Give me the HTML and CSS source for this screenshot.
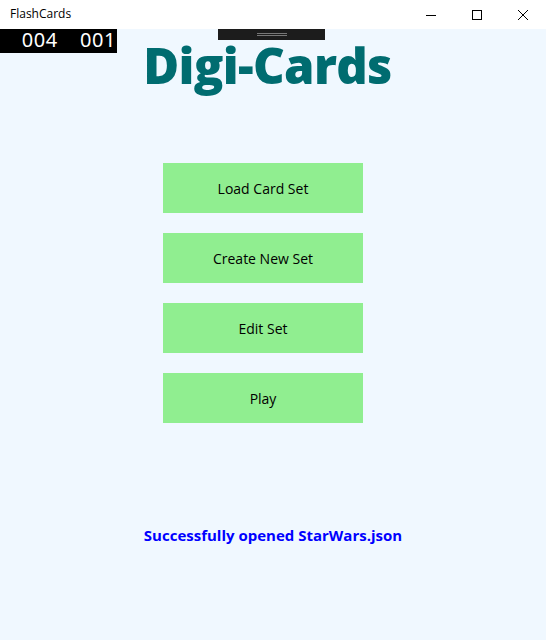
FILE: index.html
```html
<!DOCTYPE html>
<html>
<head>
<meta charset="utf-8">
<link rel="stylesheet" href="styles.css">
</head>
<body>
<div class="window">
  <div class="titlebar">
    <span class="app-title">FlashCards</span>
    <div class="controls">
      <span class="ctl"><svg width="12" height="12" viewBox="0 0 12 12"><path d="M1 6.5h10" stroke="#000" stroke-width="1"/></svg></span>
      <span class="ctl"><svg width="12" height="12" viewBox="0 0 12 12"><rect x="1.5" y="1.5" width="9" height="9" fill="none" stroke="#000" stroke-width="1"/></svg></span>
      <span class="ctl"><svg width="12" height="12" viewBox="0 0 12 12"><path d="M1 1L11 11M11 1L1 11" stroke="#000" stroke-width="1"/></svg></span>
    </div>
  </div>
  <div class="content">
    <div class="counter"><span>004</span><span>001</span></div>
    <div class="grabber"><span class="grab-lines"></span></div>
    <h1 class="title">Digi-Cards</h1>
    <div class="buttons">
      <button class="btn">Load Card Set</button>
      <button class="btn">Create New Set</button>
      <button class="btn">Edit Set</button>
      <button class="btn">Play</button>
    </div>
    <p class="status">Successfully opened StarWars.json</p>
  </div>
</div>
</body>
</html>
```
FILE: styles.css
```css
html, body {
  margin: 0;
  padding: 0;
}
body {
  width: 546px;
  height: 640px;
  overflow: hidden;
  font-family: "Open Sans", "Noto Sans", sans-serif;
}
.window {
  display: flex;
  flex-direction: column;
  height: 640px;
}
.titlebar {
  height: 29px;
  background: #fff;
  display: flex;
  align-items: center;
  justify-content: space-between;
}
.app-title {
  font-size: 12px;
  color: #000;
  padding-left: 10px;
  padding-bottom: 2px;
}
.controls {
  display: flex;
}
.ctl {
  width: 46px;
  height: 29px;
  display: flex;
  align-items: center;
  justify-content: center;
}
.ctl svg {
  display: block;
}
.content {
  position: relative;
  flex: 1;
  background: #f0f8ff;
  display: flex;
  flex-direction: column;
  align-items: center;
}
.counter {
  position: absolute;
  left: 0;
  top: 0;
  width: 117px;
  height: 24px;
  background: #000;
  color: #fff;
  font-family: "Noto Sans", sans-serif;
  font-size: 20px;
  line-height: 22px;
  letter-spacing: 0.6px;
  display: flex;
  justify-content: flex-end;
  gap: 22px;
  padding-right: 1px;
  box-sizing: border-box;
}
.grabber {
  position: absolute;
  left: 218px;
  top: 0;
  width: 107px;
  height: 11px;
  background: #1c1c1c;
  display: flex;
  justify-content: center;
  align-items: center;
}
.grab-lines {
  width: 30px;
  height: 3px;
  border-top: 1px solid #777;
  border-bottom: 1px solid #777;
  box-sizing: border-box;
}
.title {
  margin: 6px 0 0 -11px;
  font-family: "Open Sans", "Noto Sans", sans-serif;
  font-weight: 800;
  font-size: 49px;
  line-height: 60px;
  color: #006c70;
  letter-spacing: -0.7px;
}
.buttons {
  margin-top: 68px;
  margin-left: -20px;
  display: flex;
  flex-direction: column;
  gap: 20px;
}
.btn {
  width: 200px;
  height: 50px;
  border: none;
  background: #90ee90;
  color: #000;
  font-family: "Open Sans", "Noto Sans", sans-serif;
  font-size: 14px;
  padding: 0;
}
.status {
  margin: 102px 0 0 0;
  font-family: "Open Sans", "Noto Sans", sans-serif;
  font-weight: 700;
  font-size: 15px;
  color: #0000ff;
}
```
